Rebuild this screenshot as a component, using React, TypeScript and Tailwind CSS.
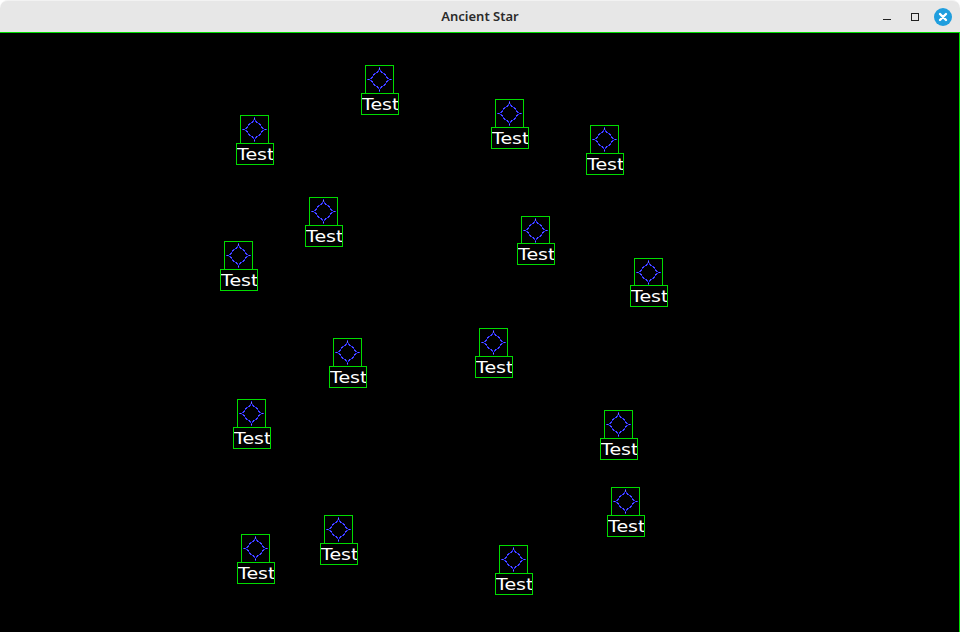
type Star = { x: number; y: number; drop: number };

// Top-left corner of each star's box, and how far below it the label starts.
const stars: Star[] = [
  { x: 365, y: 65, drop: 28 },
  { x: 240, y: 115, drop: 28 },
  { x: 495, y: 99, drop: 28 },
  { x: 590, y: 125, drop: 28 },
  { x: 309, y: 197, drop: 28 },
  { x: 224, y: 241, drop: 28 },
  { x: 521, y: 216, drop: 27 },
  { x: 634, y: 258, drop: 27 },
  { x: 333, y: 338, drop: 28 },
  { x: 479, y: 328, drop: 28 },
  { x: 237, y: 399, drop: 28 },
  { x: 604, y: 410, drop: 28 },
  { x: 611, y: 487, drop: 28 },
  { x: 324, y: 515, drop: 28 },
  { x: 241, y: 534, drop: 28 },
  { x: 499, y: 545, drop: 28 },
];

const OUTLINE =
  "M14.5 3.5 L15.8 6.6 L19.8 9.2 L22.4 13.2 L25.5 14.5 L22.4 15.8 L19.8 19.8 L15.8 22.4 L14.5 25.5 L13.2 22.4 L9.2 19.8 L6.6 15.8 L3.5 14.5 L6.6 13.2 L9.2 9.2 L13.2 6.6 Z";

function StarNode({ x, y, drop }: Star) {
  return (
    <div className="absolute w-[38px]" style={{ left: x - 4, top: y - 32, height: drop + 22 }}>
      <div className="absolute left-1 top-0 w-[29px] border border-[#00dc00]" style={{ height: drop + 1 }}>
        <svg width="29" height="29" viewBox="0 0 29 29" className="absolute -left-px -top-px" fill="none">
          <path d={OUTLINE} stroke="#2424ff" shapeRendering="crispEdges" />
          <path d={OUTLINE} stroke="#a0a0ff" strokeDasharray="1 3" />
        </svg>
      </div>
      <div className="absolute bottom-0 left-0 h-[22px] w-[38px] overflow-hidden border border-[#00dc00]">
        <span className="absolute left-0 top-px block origin-left scale-x-[1.27] font-['DejaVu_Sans'] text-[15px] leading-[21px] text-white">
          Test
        </span>
      </div>
    </div>
  );
}

export default function App() {
  return (
    <div className="flex h-[632px] w-[960px] flex-col overflow-hidden bg-black">
      <header className="grid h-8 shrink-0 grid-cols-[1fr_auto_1fr] items-center rounded-t-lg border-t border-[#f2f2f2] bg-[#e7e7e7] shadow-[0_0_0_8px_#ffffff]">
        <span />
        <h1 className="font-['Noto_Sans'] text-[13px] font-semibold leading-none text-[#2b2b2b]">Ancient Star</h1>
        <div className="flex items-center justify-end gap-[10px] pr-2">
          <svg width="18" height="18" viewBox="0 0 18 18" shapeRendering="crispEdges">
            <path d="M5 11.5H13" stroke="#222" />
          </svg>
          <svg width="18" height="18" viewBox="0 0 18 18" shapeRendering="crispEdges">
            <rect x="5.5" y="5.5" width="7" height="7" fill="none" stroke="#222" />
          </svg>
          <svg width="18" height="18" viewBox="0 0 18 18">
            <circle cx="9" cy="9" r="9" fill="#1f9ede" />
            <path d="M6 6L12 12M12 6L6 12" stroke="white" strokeWidth="2.4" strokeLinecap="round" />
          </svg>
        </div>
      </header>
      <main className="relative flex-1 border-r border-t border-[#00dc00] bg-black">
        <div className="absolute left-0 -top-px">
          {stars.map((star) => (
            <StarNode key={`${star.x}-${star.y}`} {...star} />
          ))}
        </div>
      </main>
    </div>
  );
}
